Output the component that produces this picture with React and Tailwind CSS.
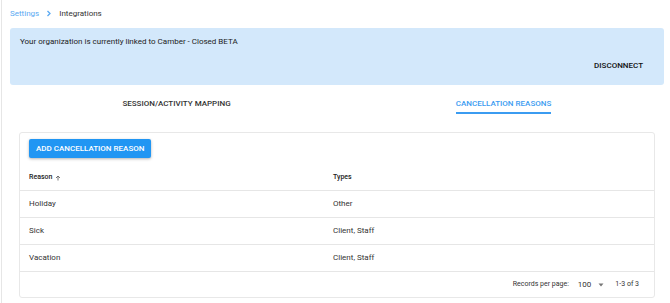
import React from 'react';

const ROWS = [
  { reason: 'Holiday', types: 'Other' },
  { reason: 'Sick', types: 'Client, Staff' },
  { reason: 'Vacation', types: 'Client, Staff' },
];

const App = () => {
  return (
    <div className="min-h-screen bg-white ml-px border-l border-[#e6e6e6] pl-2 pr-[6px] text-[#222] font-['Roboto',sans-serif]">
      {/* Breadcrumbs */}
      <div className="h-[28px] flex items-center text-[8px] pb-px">
        <span className="text-[#5aa9f2]">Settings</span>
        <svg className="mx-[7px]" width="6" height="7" viewBox="0 0 6 7">
          <path d="M1.5 1 L4 3.5 L1.5 6" fill="none" stroke="#5aa9f2" strokeWidth="1.3" />
        </svg>
        <span className="text-[#333]">Integrations</span>
      </div>

      {/* Linked banner */}
      <div className="h-[57px] rounded-[3px] bg-[#d3e8fb] pl-[10px] pr-[21px] pt-[8px] flex flex-col">
        <div className="text-[8px] leading-[12px] text-[#222]">Your organization is currently linked to Camber - Closed BETA</div>
        <div className="mt-auto mb-[13px] self-end text-[8px] leading-[12px] font-medium text-[#111]">DISCONNECT</div>
      </div>

      {/* Tabs */}
      <div className="grid grid-cols-2 h-[29px]">
        <div className="flex items-end justify-center">
          <div className="pb-[4px] ml-[6px] text-[8px] leading-[12px] font-medium text-[#333]">SESSION/ACTIVITY MAPPING</div>
        </div>
        <div className="flex items-end justify-center">
          <div className="ml-[6px] pb-[2px] border-b-2 border-[#3b9cf1] text-[8px] leading-[12px] font-medium text-[#3b9cf1]">
            CANCELLATION REASONS
          </div>
        </div>
      </div>

      {/* Card */}
      <div className="mx-[9px] mt-[18px] border border-[#e8e8e8] rounded-[3px] bg-white">
        <div className="flex pl-[9px] pt-[6px]">
          <button className="h-[19px] px-[7px] rounded-[2px] bg-[#2196f3] text-white text-[8px] leading-[19px] font-medium shadow-[0_1px_3px_rgba(0,0,0,0.3)]">
            ADD CANCELLATION REASON
          </button>
        </div>

        <div className="grid grid-cols-[304px_1fr] h-[26px] mt-[7px] items-center border-b border-[#e6e6e6] text-[7px] font-medium text-[#222] pl-[9px]">
          <div className="flex items-center gap-[3px]">
            Reason
            <svg width="6" height="6" viewBox="0 0 6 6">
              <path d="M3 5.5 V1 M1 3 L3 1 L5 3" fill="none" stroke="#666" strokeWidth="0.9" />
            </svg>
          </div>
          <div>Types</div>
        </div>

        {ROWS.map((row) => (
          <div
            key={row.reason}
            className="grid grid-cols-[304px_1fr] h-[27px] items-center border-b border-[#e6e6e6] text-[8px] text-[#333] pl-[9px]"
          >
            <div>{row.reason}</div>
            <div>{row.types}</div>
          </div>
        ))}

        <div className="h-[25px] flex items-center justify-end pr-[15px] text-[7px] text-[#333]">
          <span>Records per page:</span>
          <span className="ml-[9px] text-[8px]">100</span>
          <svg className="ml-[7px]" width="6" height="4" viewBox="0 0 6 4">
            <path d="M0.5 0.5 H5.5 L3 3.5 Z" fill="#777" />
          </svg>
          <span className="ml-[11px]">1-3 of 3</span>
        </div>
      </div>
    </div>
  );
};

export default App;
